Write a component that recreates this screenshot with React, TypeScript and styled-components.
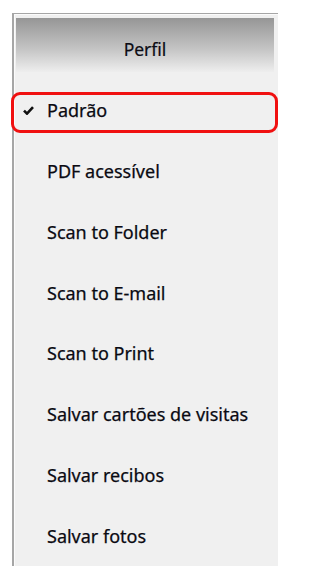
import React from 'react';
import styled, { createGlobalStyle } from 'styled-components';

const GlobalStyle = createGlobalStyle`
  html, body {
    margin: 0;
    padding: 0;
    background: #ffffff;
  }
  body {
    font-family: "Noto Sans", "Open Sans", "Liberation Sans", sans-serif;
  }
`;

const Page = styled.div`
  width: 290px;
  height: 578px;
  padding: 13px 0 0 12px;
  box-sizing: border-box;
`;

const Panel = styled.div`
  position: relative;
  width: 266px;
  height: 553px;
  box-sizing: border-box;
  background: #f0f0f0;
  border-top: 1px solid #a6a6a6;
  border-left: 2px solid #a6a6a6;
  box-shadow: inset 1px 1px 0 #fbfbfb;
  padding: 4px 4px 0 2px;
  display: flex;
  flex-direction: column;
`;

const Header = styled.div`
  height: 54px;
  box-sizing: border-box;
  padding-top: 8px;
  display: flex;
  align-items: center;
  justify-content: center;
  background: linear-gradient(to bottom, #969696 0%, #c2c2c2 55%, #eeeeee 100%);
  color: #0c0c14;
  font-size: 17.5px;
  -webkit-text-stroke: 0.2px #0c0c14;
`;

const List = styled.ul`
  list-style: none;
  margin: 8px 0 0;
  padding: 0;
  flex: 1;
  display: grid;
  grid-auto-rows: 1fr;
`;

const Row = styled.li`
  position: relative;
  display: flex;
  align-items: center;
  padding-left: 7px;
  color: #0a0a12;
  font-size: 18px;
  -webkit-text-stroke: 0.25px #0a0a12;
`;

const CheckSlot = styled.span`
  width: 24px;
  display: flex;
  align-items: center;
`;

const Highlight = styled.div`
  position: absolute;
  left: -5px;
  right: -4px;
  top: 12px;
  height: 41px;
  box-sizing: border-box;
  border: 3px solid #f01010;
  border-radius: 9px;
  pointer-events: none;
`;

const profiles = [
  'Padrão',
  'PDF acessível',
  'Scan to Folder',
  'Scan to E-mail',
  'Scan to Print',
  'Salvar cartões de visitas',
  'Salvar recibos',
  'Salvar fotos',
];

const CheckIcon = () => (
  <svg width="11" height="9" viewBox="0 0 11 9">
    <path d="M1 4.6 L4 7.6 L10 1.2" fill="none" stroke="#111" strokeWidth="2.6" />
  </svg>
);

const App = () => {
  const selected = 'Padrão';

  return (
    <Page>
      <GlobalStyle />
      <Panel>
        <Header>Perfil</Header>
        <List>
          {profiles.map((name) => (
            <Row key={name}>
              <CheckSlot>{name === selected && <CheckIcon />}</CheckSlot>
              {name}
              {name === selected && <Highlight />}
            </Row>
          ))}
        </List>
      </Panel>
    </Page>
  );
};

export default App;
